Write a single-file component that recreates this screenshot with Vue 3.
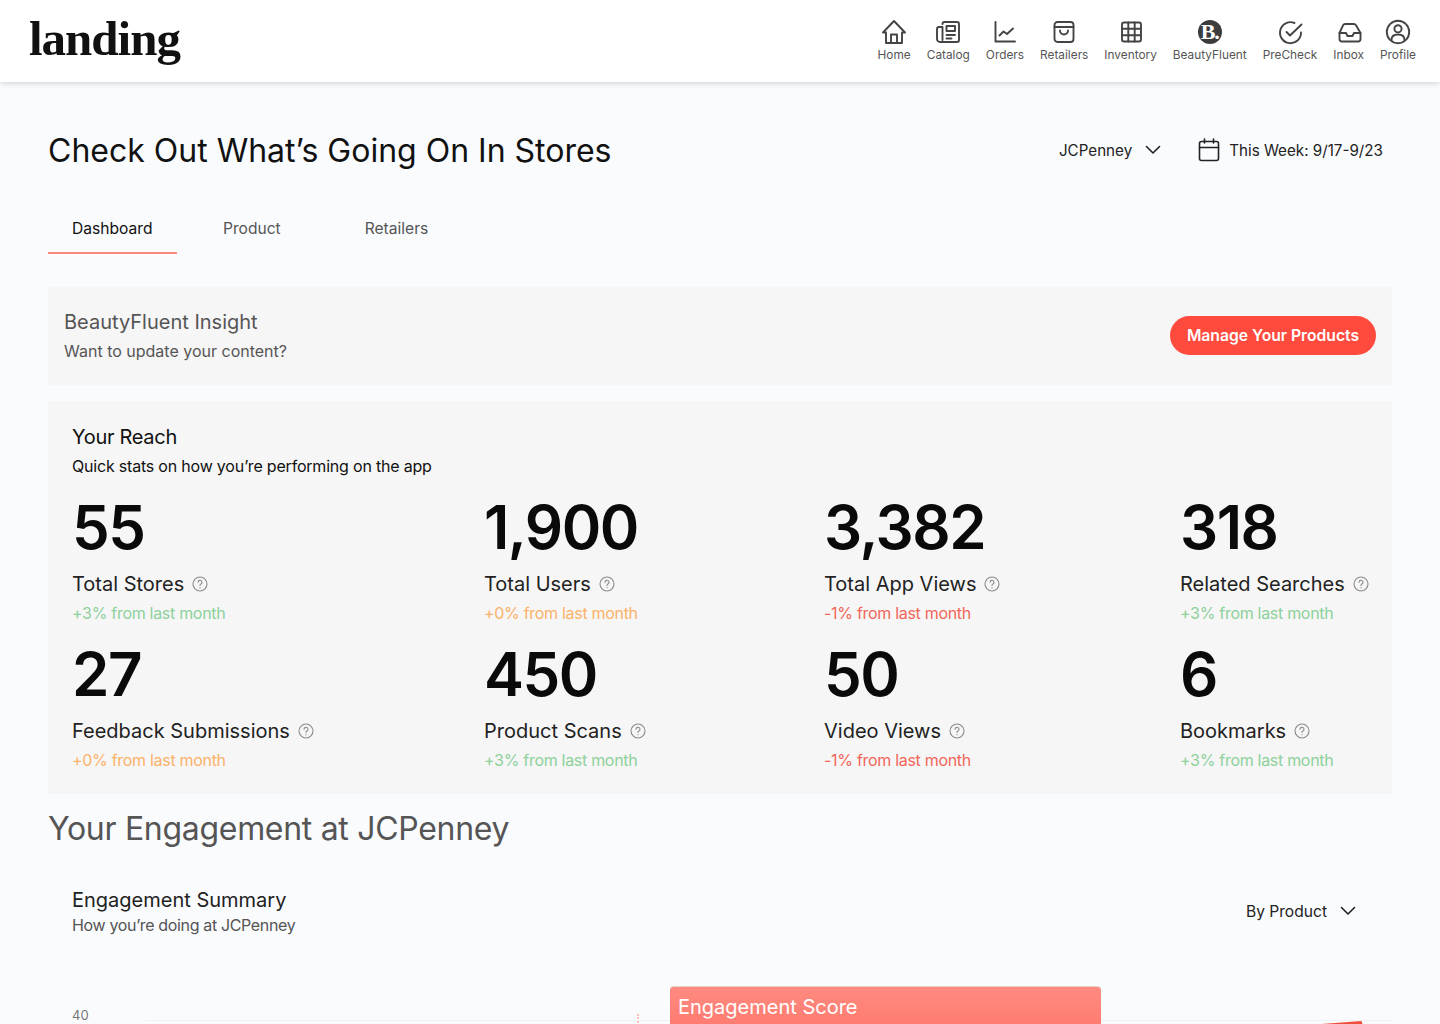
<script setup>
const nav = ['Home','Catalog','Orders','Retailers','Inventory','BeautyFluent','PreCheck','Inbox','Profile']
const rows = [
  [
    { v:'55', l:'Total Stores', d:'+3% from last month', c:'up' },
    { v:'1,900', l:'Total Users', d:'+0% from last month', c:'flat' },
    { v:'3,382', l:'Total App Views', d:'-1% from last month', c:'down' },
    { v:'318', l:'Related Searches', d:'+3% from last month', c:'up' },
  ],
  [
    { v:'27', l:'Feedback Submissions', d:'+0% from last month', c:'flat' },
    { v:'450', l:'Product Scans', d:'+3% from last month', c:'up' },
    { v:'50', l:'Video Views', d:'-1% from last month', c:'down' },
    { v:'6', l:'Bookmarks', d:'+3% from last month', c:'up' },
  ],
]
const stats = rows.flat()
</script>

<template>
  <div class="page">
    <header class="topbar">
      <div class="logo">landing</div>
      <nav class="nav">
        <a v-for="n in nav" :key="n" class="nav-item">
          <svg class="nav-icon" viewBox="0 0 26 26" fill="none" stroke="#444" stroke-width="1.9" stroke-linecap="round" stroke-linejoin="round">
            <template v-if="n==='Home'">
              <path d="M2 13.500 13 2l11 11.500h-3V24H5V13.500z"/><path d="M10 24v-8.500h6V24"/>
            </template>
            <template v-else-if="n==='Catalog'">
              <path d="M7.500 5a2 2 0 0 1 2-2h12.500a2 2 0 0 1 2 2v16a2 2 0 0 1-2 2H5a3 3 0 0 1-3-3V10a2 2 0 0 1 2-2h3.500v13"/><path d="M11.500 7h8.500v5h-8.500zM11.500 16h8.500M11.500 19.500h5"/>
            </template>
            <template v-else-if="n==='Orders'">
              <path d="M3.500 3v19.500H23"/><path d="M7.500 16.500l4-4 3.500 2.500 6-5.500"/>
            </template>
            <template v-else-if="n==='Retailers'">
              <rect x="3.500" y="3" width="19" height="20" rx="3"/><path d="M3.500 8h19"/><path d="M9 11.500a4 4 0 0 0 8 0"/>
            </template>
            <template v-else-if="n==='Inventory'">
              <rect x="4" y="3.500" width="19" height="19" rx="2"/><path d="M10.300 3.500v19M16.700 3.500v19M4 9.800h19M4 16.200h19"/>
            </template>
            <template v-else-if="n==='BeautyFluent'">
              <circle cx="13" cy="13" r="12" fill="#3c3c3c" stroke="none"/>
            </template>
            <template v-else-if="n==='PreCheck'">
              <path d="M24 13.500A10.500 10.500 0 1 1 17.500 4"/><path d="M9.500 13l3.500 3.500L24.500 5.500"/>
            </template>
            <template v-else-if="n==='Inbox'">
              <path d="M3.500 14 7 6.300A2.500 2.500 0 0 1 9.200 5h8.600A2.500 2.500 0 0 1 20 6.300L24.500 14v6a2.500 2.500 0 0 1-2.500 2.500H6A2.500 2.500 0 0 1 3.500 20z"/><path d="M3.500 14h6.500l1.500 3h5l1.500-3h6.500"/>
            </template>
            <template v-else>
              <circle cx="13" cy="13" r="11.200"/><circle cx="13" cy="9.800" r="3.600"/><path d="M6.500 21c0-4 3-5.500 6.500-5.500s6.500 1.500 6.500 5.500"/>
            </template>
          </svg>
          <span v-if="n==='BeautyFluent'" class="bf-mark">B.</span>
          <span class="nav-label">{{ n }}</span>
        </a>
      </nav>
    </header>

    <main class="content">
      <div class="title-row">
        <h1 class="title">Check Out What’s Going On In Stores</h1>
        <div class="filters">
          <div class="select">
            <span>JCPenney</span>
            <svg width="16" height="16" viewBox="0 0 16 16" fill="none" stroke="#222" stroke-width="1.600" stroke-linecap="round" stroke-linejoin="round"><path d="M1.500 4.500 8 11l6.500-6.500"/></svg>
          </div>
          <div class="date">
            <svg width="22" height="24" viewBox="0 0 22 24" fill="none" stroke="#222" stroke-width="1.600" stroke-linecap="round" stroke-linejoin="round"><rect x="1.500" y="3.500" width="19" height="19" rx="2"/><path d="M1.500 9.500h19M6.500 1v4M15.500 1v4"/></svg>
            <span>This Week: 9/17-9/23</span>
          </div>
        </div>
      </div>

      <div class="tabs">
        <div class="tab active">Dashboard</div>
        <div class="tab t2">Product</div>
        <div class="tab t3">Retailers</div>
      </div>

      <section class="insight">
        <div>
          <div class="insight-title">BeautyFluent Insight</div>
          <div class="insight-sub">Want to update your content?</div>
        </div>
        <button class="cta">Manage Your Products</button>
      </section>

      <section class="reach">
        <div class="reach-title">Your Reach</div>
        <div class="reach-sub">Quick stats on how you’re performing on the app</div>
        <div class="grid">
          <div v-for="s in stats" :key="s.l" class="stat">
            <div class="value">{{ s.v }}</div>
            <div class="label">
              <span>{{ s.l }}</span>
              <svg width="16" height="16" viewBox="0 0 16 16" fill="none" stroke="#8a8a8a" stroke-width="1.100" stroke-linecap="round"><circle cx="8" cy="8" r="7"/><path d="M6 6.300a2 2 0 1 1 2.900 1.800c-.6.300-.9.700-.9 1.300"/><path d="M8 11.600v.1"/></svg>
            </div>
            <div class="delta" :class="s.c">{{ s.d }}</div>
          </div>
        </div>
      </section>

      <h2 class="section">Your Engagement at JCPenney</h2>

      <section class="summary">
        <div class="summary-head">
          <div>
            <div class="summary-title">Engagement Summary</div>
            <div class="summary-sub">How you’re doing at JCPenney</div>
          </div>
          <div class="select by">
            <span>By Product</span>
            <svg width="16" height="16" viewBox="0 0 16 16" fill="none" stroke="#222" stroke-width="1.600" stroke-linecap="round" stroke-linejoin="round"><path d="M1.500 4.500 8 11l6.500-6.500"/></svg>
          </div>
        </div>
        <div class="chart">
          <span class="axis">40</span>
          <div class="gridline"></div>
          <div class="marker"></div>
          <div class="trend"></div>
          <div class="tooltip">Engagement Score</div>
        </div>
      </section>
    </main>
  </div>
</template>

<style>
html, body { margin: 0; background: #fafbfd; overflow: hidden; }
</style>

<style scoped>
.page { height: 1024px; overflow: hidden; background: #fafbfd; font-family: Inter, "Open Sans", sans-serif; color: #111; }
.topbar { height: 82px; background: #fff; box-shadow: 0 1px 6px rgba(0,0,0,.18); display: flex; justify-content: space-between; padding: 0 24px 0 29px; position: relative; }
.logo { font-family: "Liberation Serif", serif; font-weight: 700; font-size: 49px; letter-spacing: -1px; line-height: 78px; color: #111; }
.nav { display: flex; gap: 16px; padding-top: 19px; }
.nav-item { display: flex; flex-direction: column; align-items: center; position: relative; }
.nav-icon { width: 26px; height: 26px; }
.bf-mark { position: absolute; top: 2px; left: 50%; transform: translateX(-50%); font-family: "Liberation Serif", serif; font-weight: 700; font-size: 22px; line-height: 22px; letter-spacing: -1px; color: #fff; }
.nav-label { font-size: 11.850px; line-height: 14px; margin-top: 3px; color: #555; white-space: nowrap; }
.content { padding: 0 48px; }
.title-row { display: flex; justify-content: space-between; align-items: center; height: 48px; margin-top: 45px; padding-right: 9px; }
.title { font-size: 32px; line-height: 48px; font-weight: 400; margin: 0; color: #111; }
.filters { display: flex; gap: 37px; align-items: center; font-size: 15.200px; color: #222; margin-bottom: 2px; }
.select, .date { display: flex; align-items: center; }
.select { gap: 13px; }
.date { gap: 9px; }
.tabs { display: flex; margin-top: 31px; font-size: 15.600px; color: #555; height: 48px; }
.tab { line-height: 46px; padding: 0 24px; box-sizing: border-box; }
.tab.active { color: #111; border-bottom: 2px solid #f78a7c; width: 129px; }
.t2 { margin-left: 22px; }
.t3 { margin-left: 36px; }
.insight { margin-top: 33px; height: 98px; box-sizing: border-box; background: #f6f6f6; padding: 0 16px; display: flex; justify-content: space-between; align-items: center; }
.insight-title { font-size: 20px; line-height: 30px; color: #555; }
.insight-sub { font-size: 16px; line-height: 28px; color: #555; }
.cta { border: 0; background: #ff4b3e; color: #fff; font: inherit; font-weight: 600; font-size: 15.700px; height: 39px; width: 206px; border-radius: 20px; margin-bottom: 2px; }
.reach { margin-top: 16px; height: 393px; box-sizing: border-box; background: #f6f6f6; padding: 21px 24px 0; }
.reach-title { font-size: 20px; letter-spacing: -.3px; line-height: 30px; color: #111; }
.reach-sub { font-size: 16px; letter-spacing: -.2px; line-height: 28px; color: #111; }
.grid { display: grid; grid-template-columns: 412px 340px 356px 1fr; grid-auto-rows: 147px; margin-top: 11px; }
.value { font-size: 60px; letter-spacing: -1.500px; line-height: 72px; font-weight: 600; color: #0a0a0a; }
.label { display: flex; align-items: center; gap: 8px; font-size: 20px; line-height: 30px; margin-top: 6px; color: #222; white-space: nowrap; }
.delta { font-size: 16px; letter-spacing: -.3px; line-height: 24px; margin-top: 2px; }
.up { color: #8dd19b; }
.flat { color: #fbb26a; }
.down { color: #f2665a; }
.section { font-size: 32px; letter-spacing: -.3px; line-height: 48px; font-weight: 400; color: #555; margin: 11px 0 0; }
.summary { padding: 0 24px; }
.summary-head { display: flex; justify-content: space-between; align-items: center; margin-top: 32px; height: 50px; padding-right: 12px; }
.summary-title { font-size: 20px; line-height: 30px; color: #222; }
.summary-sub { font-size: 16px; letter-spacing: -.35px; line-height: 20px; color: #555; }
.by { font-size: 15.600px; color: #222; margin-top: 2px; }
.chart { position: relative; height: 100px; margin: 0 -24px; }
.axis { position: absolute; left: 24px; top: 72px; font-size: 13px; line-height: 16px; color: #777; }
.gridline { position: absolute; left: 97px; right: 0; top: 85px; height: 1px; background: #f0f1f3; }
.marker { position: absolute; left: 589px; top: 79px; height: 12px; border-left: 2px dotted #fbc0b8; }
.trend { position: absolute; left: 1260px; top: 86px; width: 55px; height: 4px; background: #f2503f; clip-path: polygon(0 100%, 97% 0, 100% 100%); }
.tooltip { position: absolute; left: 622px; top: 51px; width: 431px; height: 60px; box-sizing: border-box; padding: 5px 8px; border-radius: 4px 4px 0 0; border-top: 1px solid #e4cfc9; background: linear-gradient(#ff8a80, #ff7468); color: #fff; font-size: 20px; line-height: 30px; }
</style>
